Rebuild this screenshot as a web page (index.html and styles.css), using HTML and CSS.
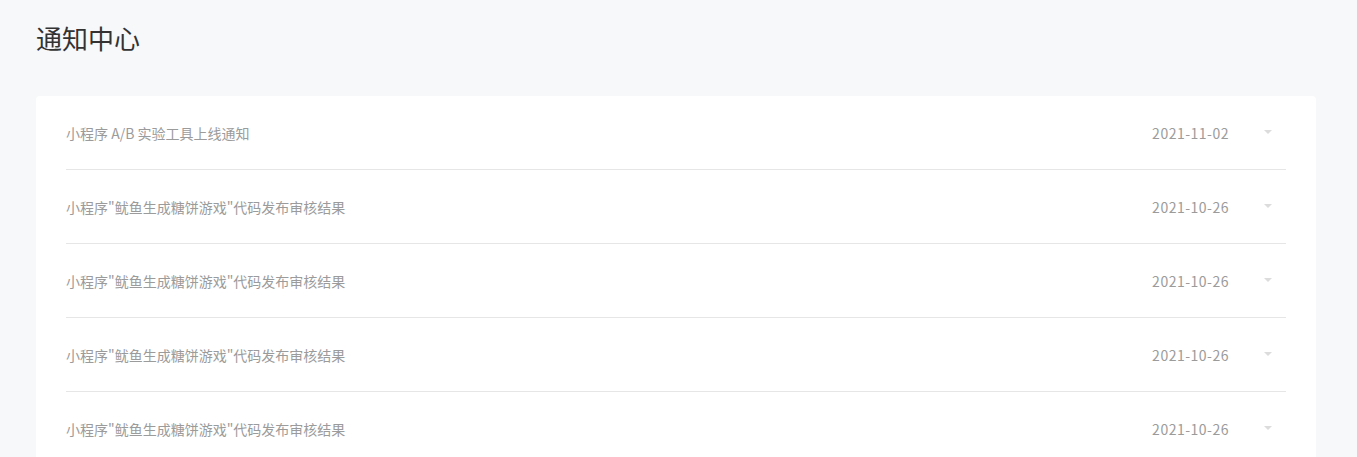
FILE: index.html
```html
<!DOCTYPE html>
<html lang="zh-CN">
<head>
<meta charset="utf-8">
<title>通知中心</title>
<link rel="stylesheet" href="styles.css">
</head>
<body>
<div class="page">
  <h1 class="page-title">通知中心</h1>
  <div class="card">
    <div class="row">
      <span class="row-title">小程序 A/B 实验工具上线通知</span>
      <span class="row-date">2021-11-02</span>
      <span class="row-arrow"><i class="tri"></i></span>
    </div>
    <div class="row">
      <span class="row-title">小程序"鱿鱼生成糖饼游戏"代码发布审核结果</span>
      <span class="row-date">2021-10-26</span>
      <span class="row-arrow"><i class="tri"></i></span>
    </div>
    <div class="row">
      <span class="row-title">小程序"鱿鱼生成糖饼游戏"代码发布审核结果</span>
      <span class="row-date">2021-10-26</span>
      <span class="row-arrow"><i class="tri"></i></span>
    </div>
    <div class="row">
      <span class="row-title">小程序"鱿鱼生成糖饼游戏"代码发布审核结果</span>
      <span class="row-date">2021-10-26</span>
      <span class="row-arrow"><i class="tri"></i></span>
    </div>
    <div class="row">
      <span class="row-title">小程序"鱿鱼生成糖饼游戏"代码发布审核结果</span>
      <span class="row-date">2021-10-26</span>
      <span class="row-arrow"><i class="tri"></i></span>
    </div>
  </div>
</div>
</body>
</html>
```

FILE: styles.css
```css
html, body {
  margin: 0;
  padding: 0;
  background: #f7f8fa;
  font-family: "Noto Sans CJK SC", "Noto Sans", sans-serif;
}
.page {
  padding: 0 41px 0 36px;
}
.page-title {
  margin: 0;
  padding-top: 20px;
  height: 96px;
  box-sizing: border-box;
  font-size: 26px;
  line-height: 36px;
  font-weight: 400;
  color: #333;
}
.card {
  background: #fff;
  border-radius: 4px;
  padding: 0 30px;
}
.row {
  display: flex;
  align-items: center;
  height: 73px;
  border-bottom: 1px solid #e6e6e6;
  font-size: 14px;
}
.row-title {
  flex: 1;
  color: #9b9b9b;
}
.row-date {
  color: #9b9b9b;
  margin-right: 21px;
  letter-spacing: 0.5px;
}
.row-arrow {
  width: 36px;
  display: flex;
  justify-content: center;
  align-items: center;
}
.tri {
  width: 0;
  height: 0;
  border-left: 4px solid transparent;
  border-right: 4px solid transparent;
  border-top: 4px solid #dcdcdc;
  margin-top: -2px;
}
```
